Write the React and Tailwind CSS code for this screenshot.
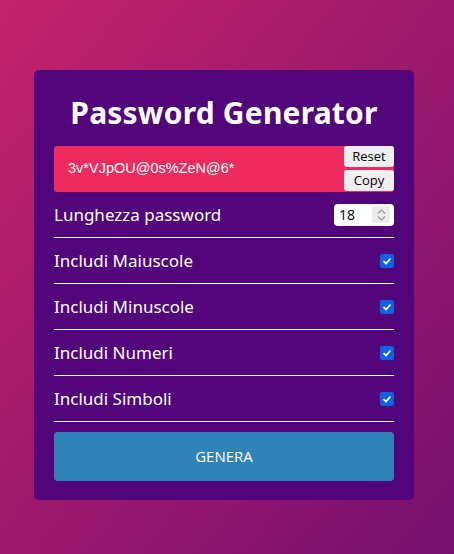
export default function App() {
  const options = [
    'Includi Maiuscole',
    'Includi Minuscole',
    'Includi Numeri',
    'Includi Simboli',
  ];

  return (
    <div className="w-[454px] h-[554px] bg-[linear-gradient(to_bottom_right,#c4226a,#76106f)] pl-[34px] pt-[70px]">
      <div className="w-[380px] h-[430px] bg-[#52057b] rounded-[5px] px-[20px] pt-[20px] flex flex-col font-['Open_Sans',sans-serif]">
        {/* Titolo */}
        <h1 className="text-white text-center font-bold text-[30px] leading-[45px] tracking-[0.2px] mb-[11px] font-['Noto_Sans',sans-serif]">
          Password Generator
        </h1>

        {/* Password */}
        <div className="h-[46px] bg-[#ed2b5e] rounded-[3px] flex items-center justify-between">
          <span className="text-white text-[14.5px] pl-[14px] font-['Liberation_Sans',sans-serif]">3v*VJpOU@0s%ZeN@6*</span>
          <div className="flex flex-col gap-[3px] self-stretch">
            <button className="w-[50px] h-[21px] bg-[#efefef] rounded-[3px] text-[13px] text-black leading-none">Reset</button>
            <button className="w-[50px] h-[21px] bg-[#efefef] rounded-[3px] text-[13px] text-black leading-none">Copy</button>
          </div>
        </div>

        {/* Lunghezza */}
        <div className="h-[46px] border-b border-white flex items-center justify-between">
          <span className="text-white text-[17px] font-['Noto_Sans',sans-serif]">Lunghezza password</span>
          <div className="w-[60px] h-[22px] bg-white rounded-[4px] flex items-center justify-between pl-[5px] pr-[4px]">
            <span className="text-[14px] text-black">18</span>
            <div className="w-[18px] h-[17px] bg-[#ebebeb] rounded-[2px] flex flex-col items-center justify-center gap-[2px]">
              <svg width="9" height="5" viewBox="0 0 9 5"><path d="M1 4.5 L4.5 1 L8 4.5" stroke="#9a9a9a" strokeWidth="1.2" fill="none" /></svg>
              <svg width="9" height="5" viewBox="0 0 9 5"><path d="M1 0.5 L4.5 4 L8 0.5" stroke="#9a9a9a" strokeWidth="1.2" fill="none" /></svg>
            </div>
          </div>
        </div>

        {/* Opzioni */}
        {options.map((label) => (
          <div key={label} className="h-[46px] border-b border-white flex items-center justify-between">
            <span className="text-white text-[17px] font-['Noto_Sans',sans-serif]">{label}</span>
            <div className="w-[14px] h-[14px] bg-[#0b63e3] rounded-[2px] flex items-center justify-center">
              <svg width="10" height="10" viewBox="0 0 10 10"><path d="M1.5 5.2 L4 7.5 L8.5 2.5" stroke="white" strokeWidth="1.8" fill="none" /></svg>
            </div>
          </div>
        ))}

        {/* Genera */}
        <button className="mt-[10px] h-[49px] w-full bg-[#3182b8] rounded-[4px] text-white text-[15px]">
          GENERA
        </button>
      </div>
    </div>
  );
}
